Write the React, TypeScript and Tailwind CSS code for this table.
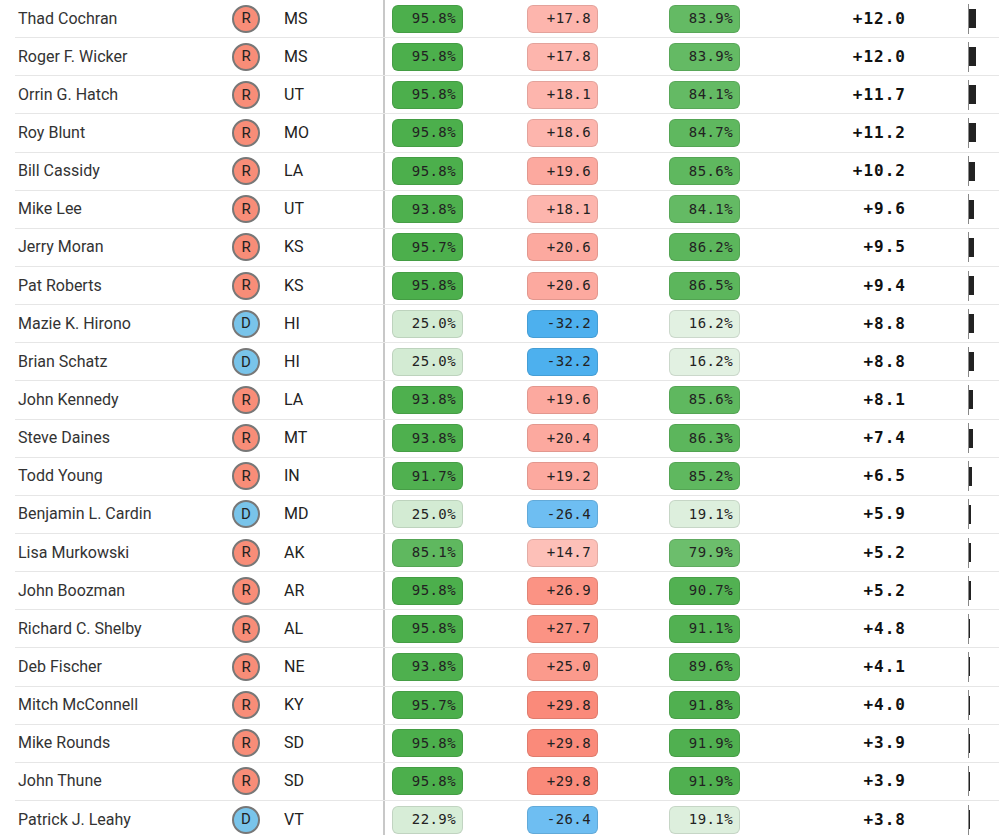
type Senator = {
  name: string;
  party: 'R' | 'D';
  state: string;
  a: number;
  b: number;
  c: number;
  score: number;
};

const senators: Senator[] = [
  { name: 'Thad Cochran', party: 'R', state: 'MS', a: 95.8, b: 17.8, c: 83.9, score: 12.0 },
  { name: 'Roger F. Wicker', party: 'R', state: 'MS', a: 95.8, b: 17.8, c: 83.9, score: 12.0 },
  { name: 'Orrin G. Hatch', party: 'R', state: 'UT', a: 95.8, b: 18.1, c: 84.1, score: 11.7 },
  { name: 'Roy Blunt', party: 'R', state: 'MO', a: 95.8, b: 18.6, c: 84.7, score: 11.2 },
  { name: 'Bill Cassidy', party: 'R', state: 'LA', a: 95.8, b: 19.6, c: 85.6, score: 10.2 },
  { name: 'Mike Lee', party: 'R', state: 'UT', a: 93.8, b: 18.1, c: 84.1, score: 9.6 },
  { name: 'Jerry Moran', party: 'R', state: 'KS', a: 95.7, b: 20.6, c: 86.2, score: 9.5 },
  { name: 'Pat Roberts', party: 'R', state: 'KS', a: 95.8, b: 20.6, c: 86.5, score: 9.4 },
  { name: 'Mazie K. Hirono', party: 'D', state: 'HI', a: 25.0, b: -32.2, c: 16.2, score: 8.8 },
  { name: 'Brian Schatz', party: 'D', state: 'HI', a: 25.0, b: -32.2, c: 16.2, score: 8.8 },
  { name: 'John Kennedy', party: 'R', state: 'LA', a: 93.8, b: 19.6, c: 85.6, score: 8.1 },
  { name: 'Steve Daines', party: 'R', state: 'MT', a: 93.8, b: 20.4, c: 86.3, score: 7.4 },
  { name: 'Todd Young', party: 'R', state: 'IN', a: 91.7, b: 19.2, c: 85.2, score: 6.5 },
  { name: 'Benjamin L. Cardin', party: 'D', state: 'MD', a: 25.0, b: -26.4, c: 19.1, score: 5.9 },
  { name: 'Lisa Murkowski', party: 'R', state: 'AK', a: 85.1, b: 14.7, c: 79.9, score: 5.2 },
  { name: 'John Boozman', party: 'R', state: 'AR', a: 95.8, b: 26.9, c: 90.7, score: 5.2 },
  { name: 'Richard C. Shelby', party: 'R', state: 'AL', a: 95.8, b: 27.7, c: 91.1, score: 4.8 },
  { name: 'Deb Fischer', party: 'R', state: 'NE', a: 93.8, b: 25.0, c: 89.6, score: 4.1 },
  { name: 'Mitch McConnell', party: 'R', state: 'KY', a: 95.7, b: 29.8, c: 91.8, score: 4.0 },
  { name: 'Mike Rounds', party: 'R', state: 'SD', a: 95.8, b: 29.8, c: 91.9, score: 3.9 },
  { name: 'John Thune', party: 'R', state: 'SD', a: 95.8, b: 29.8, c: 91.9, score: 3.9 },
  { name: 'Patrick J. Leahy', party: 'D', state: 'VT', a: 22.9, b: -26.4, c: 19.1, score: 3.8 },
];

function greenClass(v: number) {
  if (v < 18) return 'bg-[#e2f1e2]';
  if (v < 21) return 'bg-[#ddefdd]';
  if (v < 24) return 'bg-[#d7edd7]';
  if (v < 50) return 'bg-[#d3ebd3]';
  if (v < 82) return 'bg-[#6cbe6c]';
  if (v < 84.5) return 'bg-[#64ba64]';
  if (v < 86) return 'bg-[#5fb85f]';
  if (v < 88) return 'bg-[#5cb65c]';
  if (v < 90) return 'bg-[#55b355]';
  if (v < 91.5) return 'bg-[#52b152]';
  if (v < 93) return 'bg-[#50b050]';
  if (v < 95) return 'bg-[#4eb04e]';
  return 'bg-[#4caf4c]';
}

function leanClass(v: number) {
  if (v < -30) return 'bg-[#4db0ee]';
  if (v < 0) return 'bg-[#6ebef2]';
  if (v < 16) return 'bg-[#fdc0b8]';
  if (v < 19) return 'bg-[#fdb5ad]';
  if (v < 22) return 'bg-[#fca99f]';
  if (v < 26) return 'bg-[#fb9a8c]';
  if (v < 28) return 'bg-[#fb9384]';
  return 'bg-[#fa8a7a]';
}

const mono = "font-['DejaVu_Sans_Mono','Liberation_Mono',monospace]";

function Badge({ text, color }: { text: string; color: string }) {
  return (
    <div
      className={`${color} ${mono} w-[71px] h-[28px] rounded-[6px] border border-black/10 flex items-center justify-end pr-[6px] text-[14px] tracking-[0.4px] text-[#222]`}
    >
      {text}
    </div>
  );
}

export default function App() {
  return (
    <div className="w-[999px] h-[835px] overflow-hidden bg-white font-['Roboto','Liberation_Sans',sans-serif]">
      <div className="ml-[15px]">
        {senators.map((s) => (
          <div
            key={s.name}
            className="h-[38.15px] border-b border-[#e6e6e6] flex items-center"
          >
            <div className="w-[217px] pl-[3px] text-[16px] text-[#333]">{s.name}</div>
            <div
              className={`w-[28px] h-[28px] rounded-full border-2 border-[#777] flex items-center justify-center text-[15px] text-[#222] ${
                s.party === 'R' ? 'bg-[#f88d78]' : 'bg-[#79c4ea]'
              }`}
            >
              {s.party}
            </div>
            <div className="w-[123px] pl-[24px] text-[16px] text-[#222]">{s.state}</div>
            <div className="self-stretch border-l-2 border-[#c8c8c8] flex items-center pl-[7px]">
              <Badge text={`${s.a.toFixed(1)}%`} color={greenClass(s.a)} />
              <div className="ml-[64px]">
                <Badge
                  text={`${s.b > 0 ? '+' : '-'}${Math.abs(s.b).toFixed(1)}`}
                  color={leanClass(s.b)}
                />
              </div>
              <div className="ml-[71px]">
                <Badge text={`${s.c.toFixed(1)}%`} color={greenClass(s.c)} />
              </div>
              <div
                className={`w-[166px] text-right ${mono} font-bold text-[16px] tracking-[1px] text-[#111]`}
              >
                +{s.score.toFixed(1)}
              </div>
              <div className="ml-[62px] flex items-center h-[30px] border-l border-[#888]">
                <div
                  className="h-[19px] bg-[#222]"
                  style={{ width: `${Math.max(0, (s.score - 3) * 0.8)}px` }}
                />
              </div>
            </div>
          </div>
        ))}
      </div>
    </div>
  );
}
